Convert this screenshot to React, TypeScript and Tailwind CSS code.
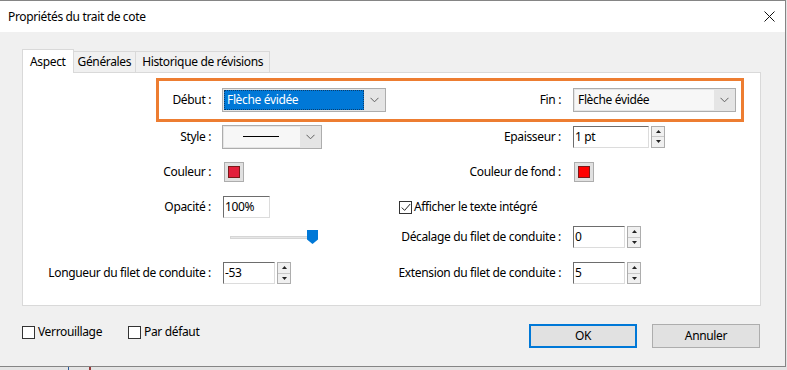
import React from "react";

const Chevron = () => (
  <svg width="9" height="6" viewBox="0 0 9 6" fill="none">
    <path d="M0.5 0.8 L4.5 4.8 L8.5 0.8" stroke="#606060" strokeWidth="1" />
  </svg>
);

const Select: React.FC<{ value?: React.ReactNode; w: string; selected?: boolean }> = ({ value, w, selected }) => (
  <div className={`${w} h-[24px] border border-[#adadad] bg-[#e5e5e5] flex items-stretch p-[1px]`}>
    <div
      className={`flex-1 flex items-center pl-[3px] ${
        selected ? "bg-[#0078d7] text-white outline outline-1 outline-dotted outline-[#0b3d6b] -outline-offset-1" : "bg-[#f7f7f7]"
      }`}
    >
      {value}
    </div>
    <div className="w-[20px] flex items-center justify-center">
      <Chevron />
    </div>
  </div>
);

const Field: React.FC<{ value: string; w: string }> = ({ value, w }) => (
  <div
    className={`${w} h-[22px] bg-white border border-t-[#6d6d6d] border-l-[#6d6d6d] border-r-[#dcdcdc] border-b-[#dcdcdc] flex items-center pl-[1px] leading-none`}
  >
    {value}
  </div>
);

const Spinner = () => (
  <div className="ml-[2px] w-[14px] h-[22px] border border-[#adadad] bg-[#f0f0f0] flex flex-col">
    <div className="flex-1 flex items-center justify-center border-b border-[#c8c8c8]">
      <svg width="5" height="3" viewBox="0 0 5 3"><path d="M2.5 0 L5 3 L0 3 Z" fill="#222" /></svg>
    </div>
    <div className="flex-1 flex items-center justify-center">
      <svg width="5" height="3" viewBox="0 0 5 3"><path d="M0 0 L5 0 L2.5 3 Z" fill="#222" /></svg>
    </div>
  </div>
);

const SpinField: React.FC<{ value: string; w: string }> = ({ value, w }) => (
  <div className="flex items-center">
    <Field value={value} w={w} />
    <Spinner />
  </div>
);

const Swatch: React.FC<{ color: string }> = ({ color }) => (
  <div className="w-[20px] h-[20px] border border-[#adadad] bg-[#e1e1e1] flex items-center justify-center">
    <div className="w-[12px] h-[12px] border border-[#7a1a1a]" style={{ background: color }} />
  </div>
);

const Check: React.FC<{ checked?: boolean }> = ({ checked }) => (
  <div className="w-[13px] h-[13px] border border-[#333] bg-white flex items-center justify-center">
    {checked && (
      <svg width="10" height="9" viewBox="0 0 10 9" fill="none">
        <path d="M0.8 4.6 L3.6 7.4 L9.2 1" stroke="#222" strokeWidth="1" />
      </svg>
    )}
  </div>
);

const Row: React.FC<{
  h: string;
  left?: string;
  leftCtl?: React.ReactNode;
  right?: string;
  rightCtl?: React.ReactNode;
  rightFree?: React.ReactNode;
}> = ({ h, left, leftCtl, right, rightCtl, rightFree }) => (
  <div className={`${h} flex items-center`}>
    <div className="w-[188px] flex justify-end whitespace-nowrap">{left}</div>
    <div className="ml-[11px] w-[178px] flex items-center">{leftCtl}</div>
    {rightFree ? (
      <div className="flex items-center">{rightFree}</div>
    ) : (
      <>
        <div className="w-[161px] flex justify-end whitespace-nowrap">{right}</div>
        <div className="ml-[12px] flex items-center">{rightCtl}</div>
      </>
    )}
  </div>
);

export default function App() {
  return (
    <div className="w-[787px] h-[370px] bg-[#e4e4e4] relative overflow-hidden text-[12px] tracking-[-0.35px] text-black font-['Noto_Sans',sans-serif]">
      <div className="w-[786px] h-[367px] bg-[#f0f0f0] border-t border-r border-b border-[#858585] flex flex-col">
        {/* Title bar */}
        <div className="h-[31px] bg-white flex items-center justify-between pl-[8px] pr-[10px]">
          <span>Propriétés du trait de cote</span>
          <svg width="11" height="11" viewBox="0 0 11 11" fill="none">
            <path d="M0.5 0.5 L10.5 10.5 M10.5 0.5 L0.5 10.5" stroke="#111" strokeWidth="1" />
          </svg>
        </div>

        {/* Tabs */}
        <div className="mt-[17px] ml-[22px] flex items-end relative z-10">
          <div className="h-[24px] px-[7px] bg-white border border-b-0 border-[#d9d9d9] flex items-center">Aspect</div>
          <div className="h-[22px] px-[4px] bg-[#f0f0f0] border border-l-0 border-[#d9d9d9] flex items-center">Générales</div>
          <div className="h-[22px] px-[6px] bg-[#f0f0f0] border border-l-0 border-[#d9d9d9] flex items-center">
            Historique de révisions
          </div>
        </div>

        {/* Panel */}
        <div className="ml-[22px] -mt-[1px] w-[739px] h-[234px] bg-white border border-[#d9d9d9] flex flex-col">
          <div className="mt-[5px] ml-[133px] w-[588px] h-[44px] border-[3px] border-[#ed7d31] flex items-center">
            <div className="w-[52px] text-right">Début :</div>
            <div className="ml-[11px]">
              <Select w="w-[164px]" value="Flèche évidée" selected />
            </div>
            <div className="w-[175px] text-right">Fin :</div>
            <div className="ml-[12px]">
              <Select w="w-[163px]" value="Flèche évidée" />
            </div>
          </div>

          <Row
            h="h-[29px]"
            left="Style :"
            leftCtl={
              <Select
                w="w-[100px]"
                value={<div className="ml-[16px] w-[36px] h-[1px] bg-black" />}
              />
            }
            right="Epaisseur :"
            rightCtl={<SpinField value="1 pt" w="w-[76px]" />}
          />
          <Row
            h="h-[42px]"
            left="Couleur :"
            leftCtl={<div className="ml-[2px]"><Swatch color="#e3203c" /></div>}
            right="Couleur de fond :"
            rightCtl={<div className="ml-[1px]"><Swatch color="#ff0000" /></div>}
          />
          <Row
            h="h-[28px]"
            left="Opacité :"
            leftCtl={<div className="ml-[1px]"><Field value="100%" w="w-[47px]" /></div>}
            rightFree={
              <div className="-ml-[1px] flex items-center gap-[2px]">
                <Check checked />
                <span>Afficher le texte intégré</span>
              </div>
            }
          />
          <Row
            h="h-[32px]"
            leftCtl={
              <div className="ml-[8px] relative w-[88px] h-[14px] flex items-center">
                <div className="w-[84px] h-[3px] bg-[#e7e7e7] border border-[#d6d6d6]" />
                <svg className="absolute left-[77px] top-[0px]" width="11" height="14" viewBox="0 0 11 14">
                  <path d="M0 0 H11 V9.5 L5.5 14 L0 9.5 Z" fill="#0078d7" />
                </svg>
              </div>
            }
            right="Décalage du filet de conduite :"
            rightCtl={<SpinField value="0" w="w-[52px]" />}
          />
          <Row
            h="h-[40px]"
            left="Longueur du filet de conduite :"
            leftCtl={<div className="ml-[1px]"><SpinField value="-53" w="w-[52px]" /></div>}
            right="Extension du filet de conduite :"
            rightCtl={<SpinField value="5" w="w-[52px]" />}
          />
        </div>

        {/* Bottom row */}
        <div className="mt-[18px] h-[24px] flex items-start">
          <div className="ml-[22px] -mt-[1px] flex items-center gap-[3px]">
            <Check />
            <span>Verrouillage</span>
          </div>
          <div className="ml-[26px] -mt-[1px] flex items-center gap-[3px]">
            <Check />
            <span>Par défaut</span>
          </div>
          <div className="ml-auto mr-[25px] flex gap-[15px]">
            <div className="w-[108px] h-[24px] bg-[#e1e1e1] border-2 border-[#0078d7] flex items-center justify-center">OK</div>
            <div className="w-[108px] h-[24px] bg-[#e1e1e1] border border-[#adadad] flex items-center justify-center">Annuler</div>
          </div>
        </div>
      </div>
      <div className="absolute left-[68px] top-[367px] w-[1px] h-[3px] bg-[#2a5a9a]" />
      <div className="absolute left-[89px] top-[367px] w-[2px] h-[3px] bg-[#9a3a3a]" />
    </div>
  );
}
